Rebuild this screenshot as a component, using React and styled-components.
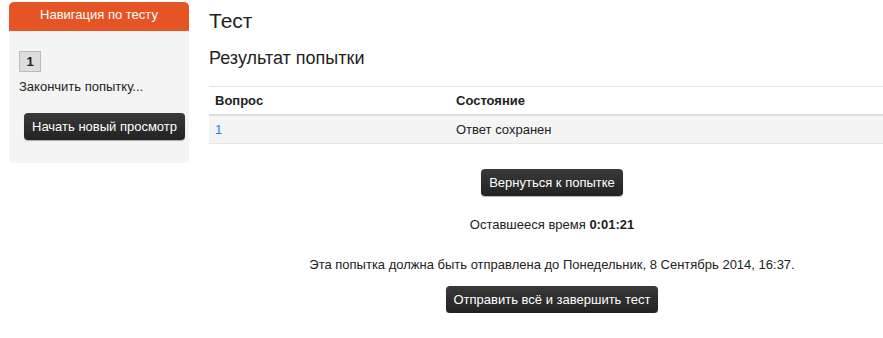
import React from 'react'
import styled, { createGlobalStyle } from 'styled-components'

const Global = createGlobalStyle`
  html, body {
    margin: 0;
    padding: 0;
    background: #fff;
    overflow: hidden;
  }
  body {
    font-family: Arial, "Liberation Sans", sans-serif;
    font-size: 13px;
    color: #222;
  }
`

export default function App() {
  return (
    <>
      <Global />
      <Page>
        <Side>
          <SideHead>Навигация по тесту</SideHead>
          <SideBody>
            <QuizNavButton>1</QuizNavButton>
            <FinishLink>Закончить попытку...</FinishLink>
            <DarkButton $ml={5}>Начать новый просмотр</DarkButton>
          </SideBody>
        </Side>
        <Main>
          <Title>Тест</Title>
          <Subtitle>Результат попытки</Subtitle>
          <Table>
            <thead>
              <tr>
                <Th $w={229}>Вопрос</Th>
                <Th>Состояние</Th>
              </tr>
            </thead>
            <tbody>
              <tr>
                <Td><QLink href="#">1</QLink></Td>
                <Td>Ответ сохранен</Td>
              </tr>
            </tbody>
          </Table>
          <Center $mt={25}>
            <DarkButton>Вернуться к попытке</DarkButton>
          </Center>
          <Center $mt={21}>
            <Note>Оставшееся время <b>0:01:21</b></Note>
          </Center>
          <Center $mt={24}>
            <Note>Эта попытка должна быть отправлена до Понедельник, 8 Сентябрь 2014, 16:37.</Note>
          </Center>
          <Center $mt={13}>
            <DarkButton>Отправить всё и завершить тест</DarkButton>
          </Center>
        </Main>
      </Page>
    </>
  )
}

const Page = styled.div`
  display: flex;
  align-items: flex-start;
  gap: 20px;
  padding: 2px 0 0 9px;
  width: 886px;
`

const Side = styled.div`
  width: 180px;
  flex: none;
  border-radius: 5px;
  overflow: hidden;
  background: #f4f4f4;
`

const SideHead = styled.div`
  background: #e55425;
  color: #fff;
  text-align: center;
  height: 29px;
  line-height: 26px;
  font-size: 13px;
`

const SideBody = styled.div`
  padding: 20px 10px 0 10px;
  box-sizing: border-box;
  height: 132px;
`

const QuizNavButton = styled.div`
  width: 20px;
  height: 19px;
  border: 1px solid #bbb;
  background: #ddd;
  font-weight: bold;
  text-align: center;
  line-height: 20px;
  font-size: 13px;
  color: #222;
`

const FinishLink = styled.div`
  margin-top: 6px;
  line-height: 17px;
`

const DarkButton = styled.button`
  display: inline-block;
  margin-top: ${p => (p.$ml ? '18px' : '0')};
  margin-left: ${p => p.$ml || 0}px;
  height: 27px;
  padding: 0 8px;
  border: none;
  border-radius: 4px;
  background: linear-gradient(#3a3a3a, #222);
  box-shadow: 0 1px 1px rgba(0, 0, 0, 0.3);
  color: #fff;
  font-family: Arial, "Liberation Sans", sans-serif;
  font-size: 13px;
  line-height: 27px;
  white-space: nowrap;
  cursor: pointer;
`

const Main = styled.div`
  flex: 1;
  min-width: 0;
`

const Title = styled.h2`
  margin: 6px 0 0 0;
  font-size: 21px;
  font-weight: normal;
  line-height: 26px;
  color: #222;
`

const Subtitle = styled.h3`
  margin: 13px 0 0 0;
  font-size: 18px;
  font-weight: normal;
  line-height: 22px;
  color: #222;
`

const Table = styled.table`
  margin-top: 17px;
  width: 100%;
  border-collapse: collapse;
  border-top: 1px solid #e6e6e6;
`

const Th = styled.th`
  width: ${p => (p.$w ? `${p.$w}px` : 'auto')};
  text-align: left;
  font-weight: bold;
  padding: 0 6px;
  height: 27px;
  border-bottom: 2px solid #ddd;
  background: #fff;
`

const Td = styled.td`
  padding: 0 6px;
  height: 27px;
  background: #f4f4f4;
  border-bottom: 1px solid #e6e6e6;
`

const QLink = styled.a`
  color: #1a88e0;
  text-decoration: none;
`

const Center = styled.div`
  margin-top: ${p => p.$mt}px;
  text-align: center;
`

const Note = styled.div`
  line-height: 16px;
`
